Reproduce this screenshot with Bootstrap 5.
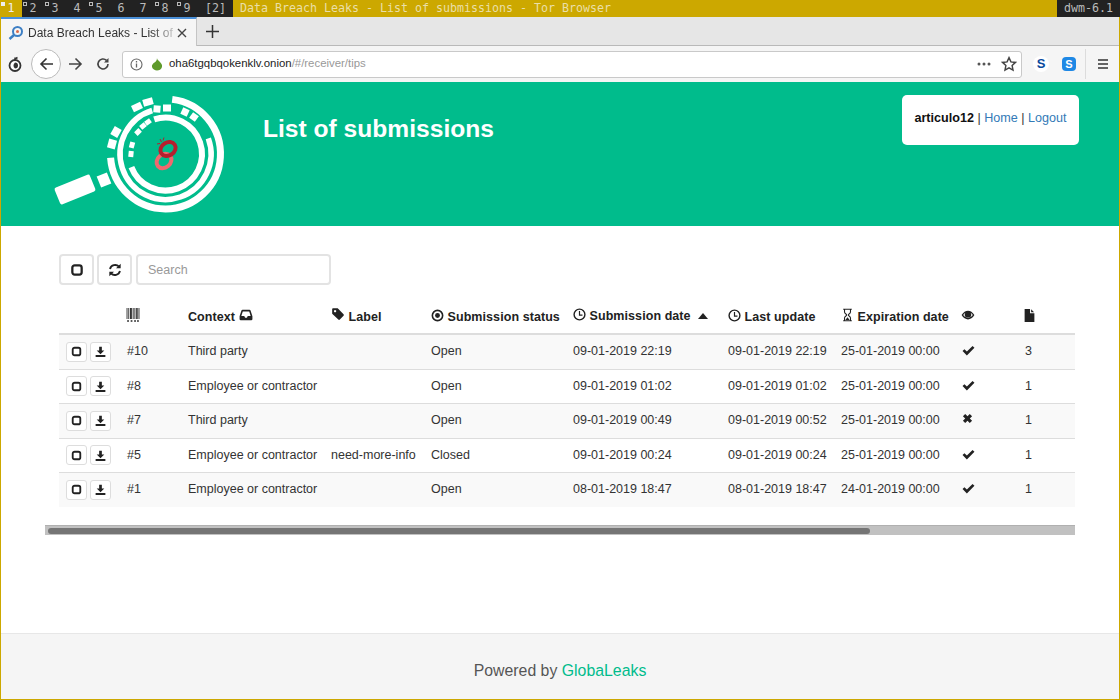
<!DOCTYPE html>
<html lang="en">
<head>
  <meta charset="UTF-8">
  <title>Data Breach Leaks - List of submissions - Tor Browser</title>
  <link href="https://cdn.jsdelivr.net/npm/bootstrap@5.3.0/dist/css/bootstrap.min.css" rel="stylesheet">
  <style>
    html, body { height: 100%; }
    body { font-family: "Liberation Sans", Arial, sans-serif; font-size: 12.5px; color: #333; background: #fff; overflow: hidden; }
    svg { display: inline-block; }
    .screen { height: 700px; border: 1px solid #cca800; border-width: 0 1px 1px 1px; }

    /* window manager bar */
    .wm-bar { height: 17px; margin: 0 -1px; background: #cca800; font: 11.63px/17px "DejaVu Sans Mono", monospace; color: #ddd; white-space: nowrap; }
    .wm-tags { background: #222; color: #bbb; }
    .wm-tag { width: 22px; text-align: center; position: relative; }
    .wm-tag.is-active { background: #cca800; color: #eee; }
    .wm-tag.has-win::before { content: ""; position: absolute; left: 1px; top: 2px; width: 4px; height: 4px; border: 1px solid #bbb; }
    .wm-tag.is-active::before { border-color: #eee; background: #eee; }
    .wm-layout { padding: 0 7px; }
    .wm-title { padding-left: 7px; color: #eadfa8; }
    .wm-status { background: #222; color: #bbb; padding: 0 7px; }

    /* browser */
    .tab-strip { height: 29px; background: #e6e6e6; border-bottom: 1px solid #b9b9b9; }
    .tab-item { width: 196px; height: 29px; margin-bottom: -1px; background: #f5f5f5; border-top: 2px solid #4a90d9; border-right: 1px solid #c4c4c4; font-size: 12px; color: #333; padding: 0 9px 0 7px; white-space: nowrap; overflow: hidden; }
    .tab-label { margin-left: 4px; -webkit-mask-image: linear-gradient(to right, #000 85%, rgba(0,0,0,.25)); mask-image: linear-gradient(to right, #000 85%, rgba(0,0,0,.25)); }
    .tab-add { width: 30px; }
    .nav-strip { height: 36px; background: #f5f5f5; padding: 0 10px 0 6px; }
    .back-btn { width: 30px; height: 30px; border: 1px solid #bbb; border-radius: 50%; background: #fff; }
    .url-box { height: 27px; background: #fff; border: 1px solid #c9c9c9; border-radius: 3px; font-size: 11.4px; color: #222; padding: 0 4px 0 7px; width: 900px; }
    .url-dim { color: #999; }
    .strip-sep { width: 1px; height: 30px; background: #dcdcdc; }

    /* page header */
    .site-head { height: 144px; background: #00bc8c; }
    .site-logo { margin: 3px 0 0 39px; }
    .site-title { font-size: 24.6px; font-weight: 700; color: #fff; margin: 32px 0 0 23px; line-height: 30px; }
    .user-box { position: absolute; top: 13px; right: 40px; width: 177px; height: 50px; background: #fff; border-radius: 5px; line-height: 47px; text-align: center; color: #333; font-size: 12.6px; }
    .user-box b { color: #111; }
    .site-head a, .powered a { text-decoration: none; }
    .user-box a { color: #337ab7; }

    /* tips */
    .tips-tools { padding: 28px 0 0 58px; gap: 3px; }
    .tool-btn { width: 35px; height: 31px; padding: 0; border: 2px solid #e3e3e3; border-radius: 4px; background: #fff; color: #222; }
    .tool-search { width: 195px; height: 31px; margin-left: 1px; border: 2px solid #e3e3e3; border-radius: 4px; font-size: 12.5px; padding: 0 10px; }
    .tool-search::placeholder { color: #999; }
    .tips-wrap { margin: 14px 44px 0 44px; padding-left: 14px; }
    .tips-table { table-layout: fixed; width: 1016px; margin: 0; border-collapse: collapse; --bs-table-striped-bg: #f9f9f9; --bs-table-color: #333; --bs-table-striped-color: #333; --bs-table-border-color: #ddd; }
    .tips-table > thead > tr > th { font-weight: 700; color: #222; padding: 8px 8px 6px; height: 35px; vertical-align: bottom; border-bottom: 2px solid #ddd; white-space: nowrap; letter-spacing: .07px; }
    .tips-table > tbody > tr > td { padding: 8px; line-height: 17.5px; border-top: 0; border-bottom: 1px solid #ddd; white-space: nowrap; }
    .tips-table > tbody > tr:last-child > td { border-bottom: 0; }
    .tips-table > tbody > tr > td.row-acts { padding: 0 0 0 7px; vertical-align: middle; }
    .row-btn { width: 21px; height: 20px; padding: 0; border: 1px solid #ddd; border-radius: 3px; background: #fff; margin-right: 3px; color: #222; }
    .h-ico { vertical-align: -1px; }
    .h-up { vertical-align: 0; }
    .state-ico { display: block; margin: 1px 0 0 1px; color: #222; }
    .fake-scroll { height: 10px; margin: 18px 44px 0 44px; background: #c1c1c1; padding: 2px 3px; border-top: 1px solid #b0b0b0; }
    .fake-thumb { height: 6px; border-radius: 3px; background: #757575; }

    .powered { margin-top: auto; height: 66px; background: #f5f5f5; border-top: 1px solid #e7e7e7; font-size: 15.85px; color: #555; text-align: center; line-height: 73px; }
    .powered a { color: #00bc8c; }
  </style>
</head>
<body>

<svg width="0" height="0" class="position-absolute">
  <symbol id="i-stop" viewBox="0 0 24 24"><rect x="5" y="5" width="14" height="14" rx="3.5" fill="none" stroke="currentColor" stroke-width="3.4"/></symbol>
  <symbol id="i-down" viewBox="0 0 24 24"><path d="M9.5 3h5v7h4.5l-7 7-7-7h4.500z M3 18.500h18V22H3z" fill="currentColor"/></symbol>
  <symbol id="i-sync" viewBox="0 0 24 24"><path d="M4.500 10.500A8 8 0 0 1 18 7M19.500 13.500A8 8 0 0 1 6 17" fill="none" stroke="currentColor" stroke-width="2.800"/><path d="M20.500 2.500v7h-7zM3.500 21.500v-7h7z" fill="currentColor"/></symbol>
  <symbol id="i-barcode" viewBox="0 0 24 24"><path d="M1 0h1.500v19H1zM4 0h1.500v19H4zM7 0h3v19H7zM11.500 0h1.500v19h-1.500zM14.500 0h1.500v19h-1.500zM17.500 0h2.500v19h-2.500zM21.500 0h1.500v19h-1.500zM2 21h3v2.500H2zM8 21h3v2.500H8zM14 21h3v2.500h-3zM19 21h3v2.500h-3z" fill="currentColor"/></symbol>
  <symbol id="i-inbox" viewBox="0 0 24 24"><path d="M6 3h12a2 2 0 0 1 1.800 1.200L23 14v5a2 2 0 0 1-2 2H3a2 2 0 0 1-2-2v-5L4.200 4.200A2 2 0 0 1 6 3zM6.500 6 4 13.500h5l1.500 3h3l1.500-3h5L17.500 6z" fill="currentColor" fill-rule="evenodd"/></symbol>
  <symbol id="i-tag" viewBox="0 0 24 24"><path d="M2 3.500A1.500 1.500 0 0 1 3.500 2h8l10 10.500a2 2 0 0 1 0 2.700l-6.300 6.300a2 2 0 0 1-2.700 0L2 11.500zM7 5a2 2 0 1 0 .01 0z" fill="currentColor" fill-rule="evenodd"/></symbol>
  <symbol id="i-dot" viewBox="0 0 24 24"><circle cx="12" cy="12" r="9.500" fill="none" stroke="currentColor" stroke-width="3"/><circle cx="12" cy="12" r="4.500" fill="currentColor"/></symbol>
  <symbol id="i-clock" viewBox="0 0 24 24"><circle cx="12" cy="12" r="10" fill="none" stroke="currentColor" stroke-width="2.600"/><path d="M12 5.500V13h5.500" fill="none" stroke="currentColor" stroke-width="2.200"/></symbol>
  <symbol id="i-glass" viewBox="0 0 24 24"><path d="M4 1.500h16M4 22.500h16M6.500 2v4.500c0 3 4 4 4 5.500s-4 2.500-4 5.500V22M17.500 2v4.500c0 3-4 4-4 5.500s4 2.500 4 5.500V22" fill="none" stroke="currentColor" stroke-width="2"/><path d="M8 21l4-5 4 5z" fill="currentColor"/></symbol>
  <symbol id="i-eye" viewBox="0 0 24 24"><path d="M1 12c3-5 7-7.500 11-7.500S20 7 23 12c-3 5-7 7.500-11 7.500S4 17 1 12zM3.800 12c2.300 3.200 5 4.800 8.200 4.800s5.900-1.600 8.200-4.800c-1-1.500-2.200-2.600-3.500-3.400a5.500 5.500 0 1 1-9.400 0C5.900 9.400 4.800 10.500 3.800 12z" fill="currentColor" fill-rule="evenodd"/></symbol>
  <symbol id="i-file" viewBox="0 0 24 24"><path d="M3 0h10v8h8v24H3zM15 .5 20.500 6H15z" fill="currentColor"/></symbol>
  <symbol id="i-check" viewBox="0 0 24 24"><path d="M1 13l3.500-3.500 4.500 4.500L19.500 3.500 23 7 9 21z" fill="currentColor"/></symbol>
  <symbol id="i-times" viewBox="0 0 24 24"><path d="M2 7l5-5 5 5 5-5 5 5-5 5 5 5-5 5-5-5-5 5-5-5 5-5z" fill="currentColor"/></symbol>
</svg>

<div class="screen d-flex flex-column">
  <div class="wm-bar d-flex">
    <div class="wm-tags d-flex">
      <span class="wm-tag is-active has-win">1</span>
      <span class="wm-tag has-win">2</span>
      <span class="wm-tag has-win">3</span>
      <span class="wm-tag">4</span>
      <span class="wm-tag has-win">5</span>
      <span class="wm-tag">6</span>
      <span class="wm-tag">7</span>
      <span class="wm-tag has-win">8</span>
      <span class="wm-tag has-win">9</span>
      <span class="wm-layout">[2]</span>
    </div>
    <div class="wm-title flex-grow-1">Data Breach Leaks - List of submissions - Tor Browser</div>
    <div class="wm-status">dwm-6.1</div>
  </div>

  <div class="tab-strip d-flex">
    <div class="tab-item d-flex align-items-center">
      <svg width="16" height="16" viewBox="0 0 16 16"><circle cx="9.500" cy="6.500" r="4.500" fill="none" stroke="#3d7fc4" stroke-width="2"/><path d="M6 10 1.500 14" stroke="#3d7fc4" stroke-width="2.500"/><circle cx="9.500" cy="6.500" r="1.500" fill="#d96a4a"/></svg>
      <span class="tab-label">Data Breach Leaks - List of</span>
      <svg class="ms-auto" width="10" height="10" viewBox="0 0 10 10"><path d="M1 1l8 8M9 1 1 9" stroke="#444" stroke-width="1.400"/></svg>
    </div>
    <div class="tab-add d-flex align-items-center justify-content-center">
      <svg width="13" height="13" viewBox="0 0 13 13"><path d="M6.500 0v13M0 6.500h13" stroke="#333" stroke-width="1.500"/></svg>
    </div>
  </div>

  <div class="nav-strip d-flex align-items-center">
    <svg width="16" height="16" viewBox="0 0 16 16" style="margin-right:8px"><circle cx="8" cy="9.500" r="5.500" fill="#fff" stroke="#333" stroke-width="1.800"/><path d="M8 6.500a3 3 0 0 1 0 6c-1-.8-1.500-1.800-1.500-3S7.300 7.300 8 6.500z" fill="#333"/><path d="M8 4V1.500M8 3l2.500-1.500" stroke="#333" stroke-width="1.500"/></svg>
    <div class="back-btn d-flex align-items-center justify-content-center">
      <svg width="15" height="14" viewBox="0 0 15 14"><path d="M14 7H2M7.500 1.500 2 7l5.500 5.500" fill="none" stroke="#333" stroke-width="1.600"/></svg>
    </div>
    <svg width="15" height="14" viewBox="0 0 15 14" style="margin-left:7px"><path d="M1 7h12M7.500 1.500 13 7l-5.500 5.500" fill="none" stroke="#444" stroke-width="1.600"/></svg>
    <svg width="14" height="14" viewBox="0 0 14 14" style="margin:0 12px 0 13px"><path d="M12 7a5 5 0 1 1-1.500-3.600" fill="none" stroke="#444" stroke-width="1.600"/><path d="M12.500 1v4.500H8z" fill="#444"/></svg>
    <div class="url-box d-flex align-items-center">
      <svg width="13" height="13" viewBox="0 0 13 13"><circle cx="6.500" cy="6.500" r="5.500" fill="none" stroke="#666" stroke-width="1.100"/><path d="M6.500 5.500v4M6.500 3v1.400" stroke="#666" stroke-width="1.300"/></svg>
      <svg width="12" height="14" viewBox="0 0 12 14" class="ms-2"><path d="M6 1c0 1.500 1 2 2.500 3.500S11.500 7.500 11 10s-3 3.500-5 3.500S1.500 12 1 10s1-3.500 2.500-4.500S6 3 6 1z" fill="#5f9a2c"/></svg>
      <span style="margin-left:6px">oha6tgqbqokenklv.onion<span class="url-dim">/#/receiver/tips</span></span>
      <span class="ms-auto d-flex align-items-center">
        <svg width="14" height="4" viewBox="0 0 14 4"><circle cx="2" cy="2" r="1.500" fill="#555"/><circle cx="7" cy="2" r="1.500" fill="#555"/><circle cx="12" cy="2" r="1.500" fill="#555"/></svg>
        <svg width="16" height="16" viewBox="0 0 24 24" style="margin-left:10px"><path d="M12 2.500l2.900 6.300 6.800.8-5 4.700 1.300 6.800-6-3.400-6 3.400 1.300-6.800-5-4.700 6.800-.8z" fill="none" stroke="#444" stroke-width="2.200"/></svg>
      </span>
    </div>
    <span class="d-flex align-items-center justify-content-center rounded-circle bg-white" style="width:16px;height:16px;margin-left:11px;color:#0b4a9e;font-weight:700;font-size:13px">S</span>
    <span class="d-flex align-items-center justify-content-center rounded-1" style="width:14px;height:14px;margin-left:13px;background:#1e88e5;color:#fff;font-weight:700;font-size:11px">S</span>
    <span class="strip-sep" style="margin:0 11px 0 9px"></span>
    <svg width="12" height="12" viewBox="0 0 12 12"><path d="M1 2h10M1 6h10M1 10h10" stroke="#333" stroke-width="1.500"/></svg>
  </div>

  <div class="site-head d-flex position-relative">
    <svg class="site-logo" width="200" height="135" viewBox="0 0 200 135">
      <g fill="none" stroke="#fff" transform="translate(.5 0)">
        <path d="M131.700 14.400A55 55 0 1 1 70.100 72.800" stroke-width="7"/>
        <path d="M167.800 53.400A45.500 45.500 0 1 1 111.700 25.500" stroke-width="5.500"/>
        <path d="M113.700 34.300A36.500 36.500 0 1 1 90.900 82.100" stroke-width="6"/>
      </g>
      <g fill="#fff">
        <rect x="-5" y="-3.500" width="10" height="7" transform="translate(97 22) rotate(-25)"/>
        <rect x="-5" y="-3.500" width="10" height="7" transform="translate(108 17) rotate(-15)"/>
        <rect x="-3.500" y="-3.500" width="7" height="7" transform="translate(117 24) rotate(5)"/>
        <rect x="-4" y="-3.500" width="8" height="7" transform="translate(127 23)"/>
        <rect x="-3.500" y="-3.500" width="7" height="7" transform="translate(145 27) rotate(25)"/>
        <rect x="-3.500" y="-3.500" width="7" height="7" transform="translate(154 32) rotate(35)"/>
        <rect x="-4" y="-4.500" width="8" height="9" transform="translate(76 47) rotate(30)"/>
        <rect x="-4" y="-4.500" width="8" height="9" transform="translate(72 59) rotate(15)"/>
        <rect x="-3" y="-2.500" width="6" height="5" transform="translate(108 37) rotate(-35)"/>
        <rect x="-3" y="-2.500" width="6" height="5" transform="translate(103 41) rotate(-40)"/>
        <rect x="-3" y="-2.500" width="6" height="5" transform="translate(98 47) rotate(-45)"/>
        <rect x="-3" y="-2.500" width="6" height="5" transform="translate(92 60) rotate(-75)"/>
        <rect x="-3" y="-2.500" width="6" height="5" transform="translate(91 69) rotate(-85)"/>
        <rect x="-19" y="-9" width="38" height="18" rx="2" transform="translate(35 104.500) rotate(-22)"/>
        <rect x="-5.500" y="-6" width="11" height="12" transform="translate(64 95) rotate(-22)"/>
      </g>
      <ellipse cx="124" cy="76" rx="8" ry="6.500" transform="rotate(-40 124 76)" fill="none" stroke="#f0686e" stroke-width="4"/>
      <ellipse cx="128" cy="64" rx="8" ry="6.500" transform="rotate(-32 128 64)" fill="none" stroke="#b5202e" stroke-width="4"/>
      <path d="M120 54l1.500 3M124 52.500l-1 3M117 59l3-.5" stroke="#b5202e" stroke-width="1"/>
    </svg>
    <h1 class="site-title">List of submissions</h1>
    <div class="user-box"><b>articulo12</b> | <a href="#">Home</a> | <a href="#">Logout</a></div>
  </div>

  <div class="tips-tools d-flex">
    <button class="tool-btn"><svg width="16" height="16"><use href="#i-stop"/></svg></button>
    <button class="tool-btn"><svg width="16" height="16"><use href="#i-sync"/></svg></button>
    <input class="tool-search form-control" placeholder="Search">
  </div>

  <div class="tips-wrap">
    <table class="table table-striped tips-table">
      <colgroup>
        <col style="width:60px"><col style="width:61px"><col style="width:143px"><col style="width:100px"><col style="width:142px"><col style="width:155px"><col style="width:113px"><col style="width:120px"><col style="width:64px"><col style="width:58px">
      </colgroup>
      <thead>
        <tr>
          <th></th>
          <th><svg class="h-ico" width="14" height="14" style="margin-left:-1px"><use href="#i-barcode"/></svg></th>
          <th>Context <svg class="h-ico" width="14" height="14"><use href="#i-inbox"/></svg></th>
          <th><svg class="h-ico h-up" width="14" height="14"><use href="#i-tag"/></svg> Label</th>
          <th><svg class="h-ico" width="13" height="13"><use href="#i-dot"/></svg> Submission status</th>
          <th><svg class="h-ico h-up" width="13" height="13"><use href="#i-clock"/></svg> <span class="position-relative" style="top:-1px">Submission date</span> <svg class="ms-1" width="10" height="6" viewBox="0 0 10 6" style="vertical-align:2px"><path d="M5 0l5 6H0z" fill="#222"/></svg></th>
          <th><svg class="h-ico" width="13" height="13"><use href="#i-clock"/></svg> Last update</th>
          <th><svg class="h-ico" width="13" height="14"><use href="#i-glass"/></svg> Expiration date</th>
          <th><svg class="h-ico" width="14" height="14"><use href="#i-eye"/></svg></th>
          <th><svg class="h-ico" width="13" height="13" style="margin-left:-2px"><use href="#i-file"/></svg></th>
        </tr>
      </thead>
      <tbody>
        <tr>
          <td class="row-acts"><button class="row-btn"><svg width="13" height="13"><use href="#i-stop"/></svg></button><button class="row-btn"><svg width="13" height="13"><use href="#i-down"/></svg></button></td>
          <td>#10</td><td>Third party</td><td></td><td>Open</td><td>09-01-2019 22:19</td><td>09-01-2019 22:19</td><td>25-01-2019 00:00</td>
          <td><svg class="state-ico" width="13" height="13"><use href="#i-check"/></svg></td><td>3</td>
        </tr>
        <tr>
          <td class="row-acts"><button class="row-btn"><svg width="13" height="13"><use href="#i-stop"/></svg></button><button class="row-btn"><svg width="13" height="13"><use href="#i-down"/></svg></button></td>
          <td>#8</td><td>Employee or contractor</td><td></td><td>Open</td><td>09-01-2019 01:02</td><td>09-01-2019 01:02</td><td>25-01-2019 00:00</td>
          <td><svg class="state-ico" width="13" height="13"><use href="#i-check"/></svg></td><td>1</td>
        </tr>
        <tr>
          <td class="row-acts"><button class="row-btn"><svg width="13" height="13"><use href="#i-stop"/></svg></button><button class="row-btn"><svg width="13" height="13"><use href="#i-down"/></svg></button></td>
          <td>#7</td><td>Third party</td><td></td><td>Open</td><td>09-01-2019 00:49</td><td>09-01-2019 00:52</td><td>25-01-2019 00:00</td>
          <td><svg class="state-ico" width="11" height="11"><use href="#i-times"/></svg></td><td>1</td>
        </tr>
        <tr>
          <td class="row-acts"><button class="row-btn"><svg width="13" height="13"><use href="#i-stop"/></svg></button><button class="row-btn"><svg width="13" height="13"><use href="#i-down"/></svg></button></td>
          <td>#5</td><td>Employee or contractor</td><td>need-more-info</td><td>Closed</td><td>09-01-2019 00:24</td><td>09-01-2019 00:24</td><td>25-01-2019 00:00</td>
          <td><svg class="state-ico" width="13" height="13"><use href="#i-check"/></svg></td><td>1</td>
        </tr>
        <tr>
          <td class="row-acts"><button class="row-btn"><svg width="13" height="13"><use href="#i-stop"/></svg></button><button class="row-btn"><svg width="13" height="13"><use href="#i-down"/></svg></button></td>
          <td>#1</td><td>Employee or contractor</td><td></td><td>Open</td><td>08-01-2019 18:47</td><td>08-01-2019 18:47</td><td>24-01-2019 00:00</td>
          <td><svg class="state-ico" width="13" height="13"><use href="#i-check"/></svg></td><td>1</td>
        </tr>
      </tbody>
    </table>
  </div>
  <div class="fake-scroll"><div class="fake-thumb" style="width:80.3%"></div></div>

  <div class="powered">Powered by <a href="#">GlobaLeaks</a></div>
</div>

<script src="https://cdn.jsdelivr.net/npm/bootstrap@5.3.0/dist/js/bootstrap.bundle.min.js"></script>
</body>
</html>
